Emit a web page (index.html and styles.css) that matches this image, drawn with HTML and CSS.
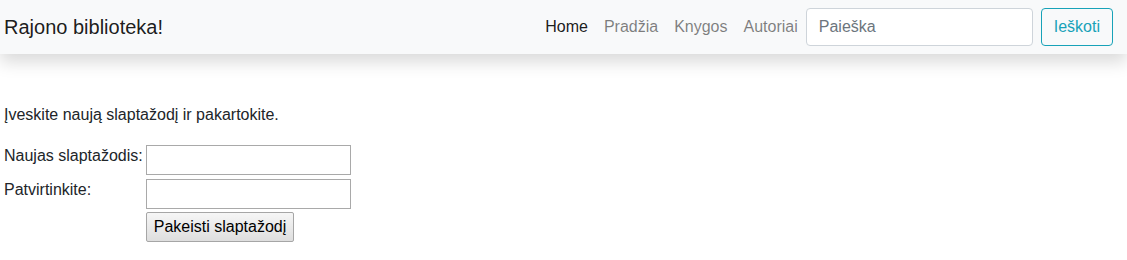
FILE: index.html
```html
<!DOCTYPE html>
<html lang="lt">
<head>
<meta charset="utf-8">
<title>Rajono biblioteka!</title>
<link rel="stylesheet" href="styles.css">
</head>
<body>
<nav class="navbar">
  <a class="brand" href="#">Rajono biblioteka!</a>
  <div class="nav-right">
    <ul class="nav">
      <li><a class="nav-link active" href="#">Home</a></li>
      <li><a class="nav-link" href="#">Pradžia</a></li>
      <li><a class="nav-link" href="#">Knygos</a></li>
      <li><a class="nav-link" href="#">Autoriai</a></li>
    </ul>
    <form class="search">
      <input class="search-input" type="search" placeholder="Paieška">
      <button class="search-btn" type="button">Ieškoti</button>
    </form>
  </div>
</nav>
<main class="content">
  <p class="intro">Įveskite naują slaptažodį ir pakartokite.</p>
  <form>
    <table class="form-table">
      <tr>
        <td class="label-cell"><label>Naujas slaptažodis:</label></td>
        <td class="input-cell"><input class="field" type="password"></td>
      </tr>
      <tr>
        <td class="label-cell"><label>Patvirtinkite:</label></td>
        <td class="input-cell"><input class="field" type="password"></td>
      </tr>
      <tr>
        <td></td>
        <td class="input-cell"><button class="submit" type="button">Pakeisti slaptažodį</button></td>
      </tr>
    </table>
  </form>
</main>
</body>
</html>
```
FILE: styles.css
```css
* { box-sizing: border-box; }
html, body { margin: 0; padding: 0; }
body {
  font-family: "Liberation Sans", Arial, sans-serif;
  font-size: 16px;
  line-height: 1.5;
  color: #212529;
  background: #fff;
}
.navbar {
  display: flex;
  align-items: center;
  justify-content: space-between;
  height: 54px;
  padding: 8px 14px 8px 4px;
  background: #f8f9fa;
  box-shadow: 0 8px 16px rgba(0, 0, 0, 0.15);
}
.brand {
  font-size: 20px;
  line-height: 30px;
  color: rgba(0, 0, 0, 0.9);
  text-decoration: none;
}
.nav-right { display: flex; align-items: center; }
.nav { display: flex; list-style: none; margin: 0; padding: 0; }
.nav-link {
  display: block;
  padding: 8px;
  color: rgba(0, 0, 0, 0.5);
  text-decoration: none;
}
.nav-link.active { color: rgba(0, 0, 0, 0.9); }
.search { display: flex; align-items: center; margin: 0; }
.search-input {
  width: 227px;
  height: 38px;
  padding: 6px 12px;
  font: inherit;
  color: #495057;
  background: #fff;
  border: 1px solid #ced4da;
  border-radius: 4px;
  margin-right: 8px;
}
.search-input::placeholder { color: #6c757d; }
.search-btn {
  height: 38px;
  padding: 6px 12px;
  font: inherit;
  color: #17a2b8;
  background: transparent;
  border: 1px solid #17a2b8;
  border-radius: 4px;
}
.content { padding: 49px 4px 0; }
.intro { margin: 0 0 15px; }
.form-table {
  border-spacing: 2px;
  margin-left: -3px;
}
.form-table td { padding: 1px; }
.label-cell { vertical-align: top; }
.form-table .label-cell { padding-right: 0; }
.input-cell { padding-left: 0; }
.form-table label {
  display: block;
  margin-top: -1px;
}
.field {
  width: 205px;
  height: 30px;
  padding: 1px 2px;
  font: inherit;
  background: #fff;
  border: 1px solid #a9a9a9;
  border-radius: 0;
  display: block;
}
.submit {
  height: 30px;
  margin-top: -1px;
  padding: 1px 7px;
  font: inherit;
  color: #000;
  background: linear-gradient(#f6f6f6, #dedede);
  border: 1px solid #a6a6a6;
  border-radius: 2px;
  display: block;
}
```
